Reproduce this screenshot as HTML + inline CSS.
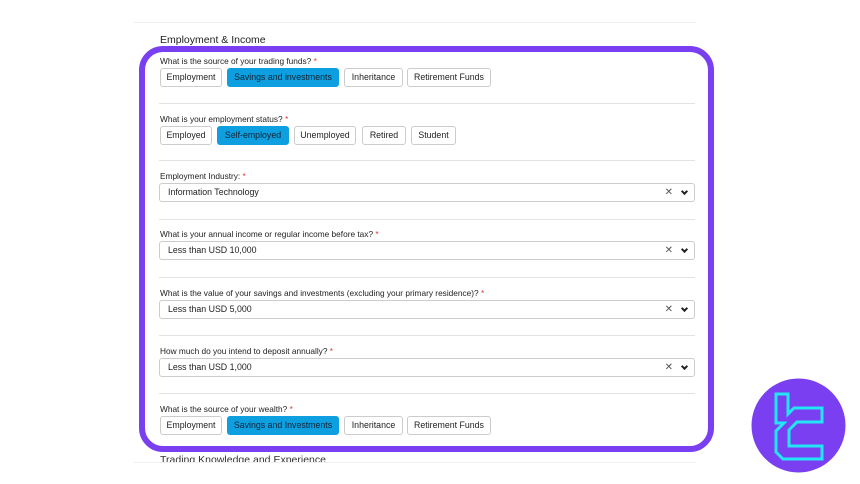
<!DOCTYPE html>
<html><head><style>
*{box-sizing:border-box;margin:0;padding:0}
body{width:860px;height:484px;background:#fff;position:relative;overflow:hidden;font-family:"Liberation Sans",sans-serif;color:#222}
.a{position:absolute}
.lbl{position:absolute;left:160px;font-size:8.3px;color:#222}
.lbl b{color:#e0353b;font-weight:normal}
.btn{position:absolute;height:19px;border:1px solid #ccc;border-radius:3px;font-size:8.8px;line-height:17px;text-align:center;color:#222;background:#fff}
.on{background:#0d9fe0;border-color:#0d9fe0;color:#123}
.hr{position:absolute;left:159px;width:536px;height:1px;background:#e3e3e3}
.sel{position:absolute;left:159px;width:536px;height:19px;border:1px solid #ccc;border-radius:3px;font-size:8.8px;line-height:17px;padding-left:8px}
.sel i{position:absolute;right:21px;top:0;font-style:normal;color:#555;font-size:10px}
.sel s{position:absolute;right:7px;top:5px;width:5px;height:5px;border-right:2px solid #222;border-bottom:2px solid #222;transform:rotate(45deg)}
</style></head><body>
<div class="a" style="left:134px;top:22px;width:562px;height:1px;background:#eee"></div>
<div class="a" style="left:160px;top:34px;font-size:10.5px;color:#222">Employment &amp; Income</div>
<div class="a" style="left:160px;top:454px;font-size:10.5px;color:#333">Trading Knowledge and Experience</div>
<div class="a" style="left:134px;top:462px;width:562px;height:22px;background:#fff;border-top:1px solid #f0f0f0"></div>
<div class="a" style="left:139px;top:46px;width:575px;height:406px;border:6px solid #7b3ff2;border-radius:24px"></div>

<div class="lbl" style="top:56px">What is the source of your trading funds? <b>*</b></div>
<div class="btn" style="left:160px;top:68px;width:62px">Employment</div>
<div class="btn on" style="left:227px;top:68px;width:112px">Savings and investments</div>
<div class="btn" style="left:344px;top:68px;width:59px">Inheritance</div>
<div class="btn" style="left:407px;top:68px;width:84px">Retirement Funds</div>
<div class="hr" style="top:103px"></div>

<div class="lbl" style="top:114px">What is your employment status? <b>*</b></div>
<div class="btn" style="left:160px;top:126px;width:52px">Employed</div>
<div class="btn on" style="left:217px;top:126px;width:72px">Self-employed</div>
<div class="btn" style="left:294px;top:126px;width:62px">Unemployed</div>
<div class="btn" style="left:362px;top:126px;width:44px">Retired</div>
<div class="btn" style="left:411px;top:126px;width:45px">Student</div>
<div class="hr" style="top:160px"></div>

<div class="lbl" style="top:171px">Employment Industry: <b>*</b></div>
<div class="sel" style="top:183px">Information Technology<i>✕</i><s></s></div>
<div class="hr" style="top:219px"></div>

<div class="lbl" style="top:229px">What is your annual income or regular income before tax? <b>*</b></div>
<div class="sel" style="top:241px">Less than USD 10,000<i>✕</i><s></s></div>
<div class="hr" style="top:277px"></div>

<div class="lbl" style="top:288px">What is the value of your savings and investments (excluding your primary residence)? <b>*</b></div>
<div class="sel" style="top:300px">Less than USD 5,000<i>✕</i><s></s></div>
<div class="hr" style="top:335px"></div>

<div class="lbl" style="top:346px">How much do you intend to deposit annually? <b>*</b></div>
<div class="sel" style="top:358px">Less than USD 1,000<i>✕</i><s></s></div>
<div class="hr" style="top:393px"></div>

<div class="lbl" style="top:404px">What is the source of your wealth? <b>*</b></div>
<div class="btn" style="left:160px;top:416px;width:62px">Employment</div>
<div class="btn on" style="left:227px;top:416px;width:112px">Savings and Investments</div>
<div class="btn" style="left:344px;top:416px;width:59px">Inheritance</div>
<div class="btn" style="left:407px;top:416px;width:84px">Retirement Funds</div>

<svg class="a" style="left:751px;top:378px" width="95" height="95" viewBox="0 0 95 95">
<circle cx="47.5" cy="47.5" r="47" fill="#7b3ff2"/>
<path d="M25 16 H37 V36 L43 30 H71 V44 H46 L38 52 V68 H71 V81 H32 L25 74 V53 L33 45 H25 Z" fill="none" stroke="#22e6f5" stroke-width="3"/>
</svg>
</body></html>
